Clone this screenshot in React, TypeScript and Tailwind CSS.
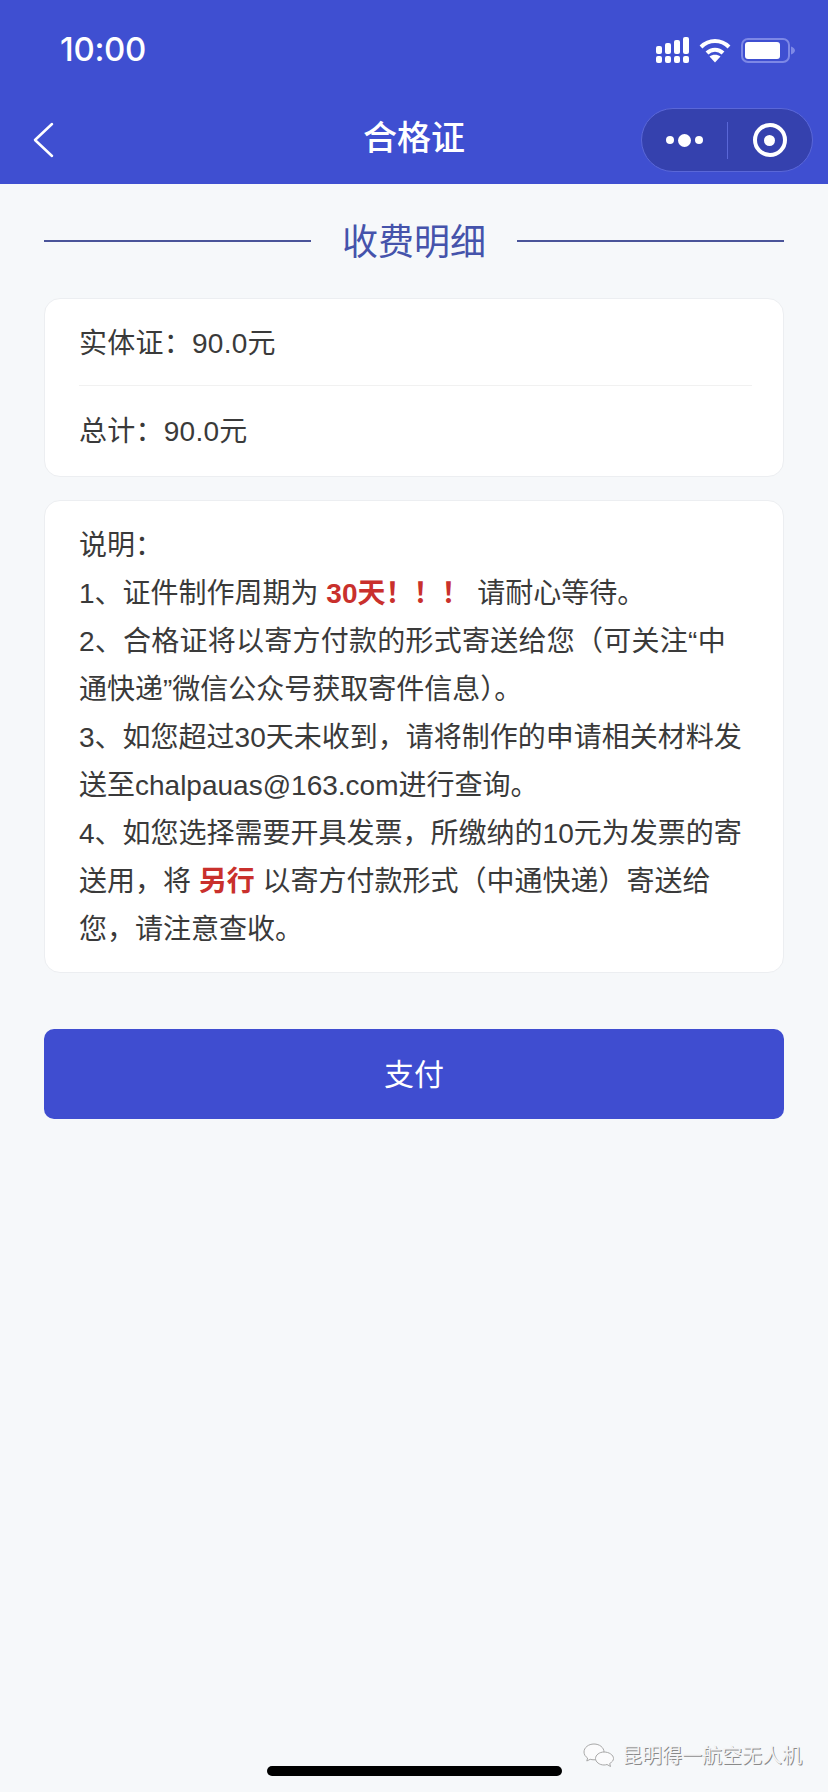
const FONT = 'font-["Liberation_Sans","Noto_Sans_CJK_SC",sans-serif]';

function Signal() {
  const cols = [
    { x: 0, top: 9 },
    { x: 9, top: 6 },
    { x: 18, top: 3 },
    { x: 27, top: 0 },
  ];
  return (
    <svg width="33" height="26" viewBox="0 0 33 26" fill="#fff">
      {cols.map((c) => (
        <g key={c.x}>
          <rect x={c.x} y={c.top} width="6" height={17 - c.top} rx="2" />
          <rect x={c.x} y="19" width="6" height="7" rx="2" />
        </g>
      ))}
    </svg>
  );
}

function Wifi() {
  return (
    <svg width="32" height="25" viewBox="0 0 32 25" fill="none" stroke="#fff" strokeWidth="4">
      <path d="M2 9C10 1 22 1 30 9" />
      <path d="M8 15C12.5 10.500 19.500 10.500 24 15" />
      <path d="M16 24.500L10.500 18.500C13.500 16 18.500 16 21.500 18.500Z" fill="#fff" stroke="none" />
    </svg>
  );
}

function Battery() {
  return (
    <svg width="54" height="25" viewBox="0 0 54 25">
      <rect x="1" y="1" width="47" height="23" rx="6" fill="none" stroke="#7d88e6" strokeWidth="2" />
      <rect x="4" y="4" width="35" height="17" rx="3" fill="#fff" />
      <path d="M50 8.500C52.500 9.500 54 11 54 12.500C54 14 52.500 15.500 50 16.500Z" fill="#7d88e6" />
    </svg>
  );
}

export default function App() {
  return (
    <div className={`relative h-[1792px] w-[828px] overflow-hidden bg-[#f6f8fa] ${FONT}`}>
      <header className="relative h-[184px] bg-[#3f4fd1] text-white">
        <div className="flex h-[100px] items-center justify-between pl-[60px] pr-[33px]">
          <span className="font-['Inter',sans-serif] text-[33px] font-medium tracking-[-0.3px]">10:00</span>
          <div className="flex items-center gap-[10px]">
            <Signal />
            <Wifi />
            <Battery />
          </div>
        </div>
        <div className="relative flex h-[84px] items-center justify-center pb-[12px]">
          <svg className="absolute left-[32px] top-[22px]" width="22" height="36" viewBox="0 0 22 36" fill="none" stroke="#fff" strokeWidth="2.500" strokeLinecap="round" strokeLinejoin="round">
            <path d="M20 2L3 18L20 34" />
          </svg>
          <span className="text-[34px] font-medium leading-none font-['Noto_Sans_CJK_SC',sans-serif]">合格证</span>
          <div className="absolute left-[641px] top-[8px] flex h-[64px] w-[172px] items-center rounded-full border border-[#5a67d8] bg-[#3541ae]">
            <div className="flex flex-1 items-center justify-center gap-[4px]">
              <i className="block h-[8px] w-[8px] rounded-full bg-white" />
              <i className="block h-[13px] w-[13px] rounded-full bg-white" />
              <i className="block h-[8px] w-[8px] rounded-full bg-white" />
            </div>
            <div className="h-[37px] w-px bg-[#5a67d8]" />
            <div className="flex flex-1 items-center justify-center">
              <div className="flex h-[34px] w-[34px] items-center justify-center rounded-full border-[4px] border-white">
                <div className="h-[11px] w-[11px] rounded-full bg-white" />
              </div>
            </div>
          </div>
        </div>
      </header>

      <main className="px-[44px]">
        <div className="flex h-[114px] items-center justify-between">
          <div className="h-[2px] w-[267px] bg-[#4a5499]" />
          <span className="pb-[4px] text-[36px] leading-none text-[#4553ab] font-['Noto_Sans_CJK_SC',sans-serif]">收费明细</span>
          <div className="h-[2px] w-[267px] bg-[#4a5499]" />
        </div>

        <section className="rounded-[16px] border border-[#eceef1] bg-white pl-[34px] pr-[31px] text-[28px] tracking-[0.25px] text-[#3a3a3a]">
          <div className="flex h-[87px] items-center border-b border-[#f1f1f1] pt-[3px]">实体证：90.0元</div>
          <div className="flex h-[90px] items-center pt-[1px]">总计：90.0元</div>
        </section>

        <section className="mt-[23px] rounded-[16px] border border-[#eceef1] bg-white pl-[34px] pr-[31px] pt-[21px] pb-[18px] text-[28px] leading-[48px] text-[#3a3a3a] whitespace-nowrap">
          <p>说明：</p>
          <p>
            1、证件制作周期为 <b className="font-bold text-[#c9302c]">30天！！！</b> 请耐心等待。
          </p>
          <p className="tracking-[0.25px]">2、合格证将以寄方付款的形式寄送给您（可关注“中</p>
          <p>通快递”微信公众号获取寄件信息）。</p>
          <p>3、如您超过30天未收到，请将制作的申请相关材料发</p>
          <p>送至chalpauas@163.com进行查询。</p>
          <p>4、如您选择需要开具发票，所缴纳的10元为发票的寄</p>
          <p>
            送用，将 <b className="font-bold text-[#c9302c]">另行</b> 以寄方付款形式（中通快递）寄送给
          </p>
          <p>您，请注意查收。</p>
        </section>

        <button className="mt-[56px] flex h-[90px] w-full items-center justify-center rounded-[10px] bg-[#3f4dd0] text-[30px] text-white">
          支付
        </button>
      </main>

      <div className="absolute left-[267px] top-[1766px] h-[10px] w-[295px] rounded-full bg-black" />

      <div className="absolute left-[583px] top-[1742px] flex items-center gap-[7px]">
        <svg width="32" height="26" viewBox="0 0 32 26" fill="#fbfbfc" stroke="#a8a8a8" strokeWidth="1">
          <path d="M11 2C5.500 2 1 5.600 1 10C1 12.500 2.400 14.600 4.600 16L3.800 19L7.200 17.300C8.300 17.600 9.600 17.800 11 17.800C17 17.800 21 14.400 21 10C21 5.600 16.500 2 11 2Z" />
          <path d="M21 10C16.500 10 12.500 13 12.500 16.500C12.500 20 16.500 23 21 23C22 23 23 22.800 24 22.500L27.500 24.500L26.700 21.500C29 20.200 30.500 18.500 30.500 16.500C30.500 13 26 10 21 10Z" />
        </svg>
        <span className="text-[20px] leading-none text-[#f4f4f5] [text-shadow:1px_1px_0_#8a8a8a] font-['Noto_Sans_CJK_SC',sans-serif]">昆明得一航空无人机</span>
      </div>
    </div>
  );
}
